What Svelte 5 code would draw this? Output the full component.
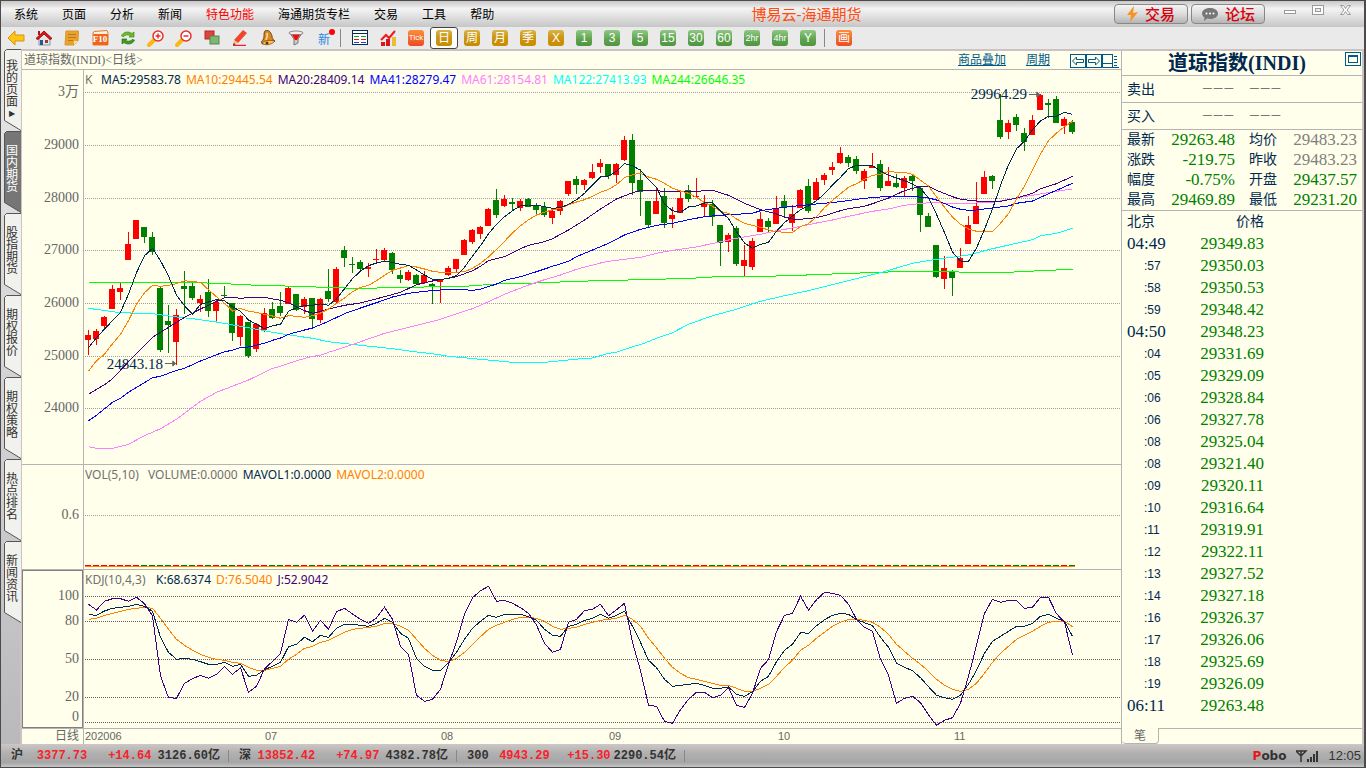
<script lang="ts">
  const menus = ['系统', '页面', '分析', '新闻', '特色功能', '海通期货专栏', '交易', '工具', '帮助'];
  const goldPeriods = ['日', '周', '月', '季', 'X'];
  const greenPeriods = ['1', '3', '5', '15', '30', '60', '2hr', '4hr', 'Y'];
  const tabs = ['我的页面', '国内期货', '股指期货', '期权报价', '期权策略', '热点排名', '新闻资讯'];

  // plot sizes in px; curve and candle data below are in thirds of a px
  const W = 1037;
  const PRICE_H = 394;
  const VOL_H = 104;
  const KDJ_H = 158;

  const priceAxis = [
    { label: '3万', y: 22 }, { label: '29000', y: 75 }, { label: '28000', y: 128 },
    { label: '27000', y: 180 }, { label: '26000', y: 233 }, { label: '25000', y: 286 },
    { label: '24000', y: 338 }
  ];
  const kdjAxis = [
    { label: '100', y: 26 }, { label: '80', y: 51 }, { label: '50', y: 89 },
    { label: '20', y: 127 }, { label: '0', y: 147 }
  ];
  const kdjGrid = [26, 51, 89, 127, 152];

  const months = [
    { label: '202006', x: 1 }, { label: '07', x: 181 }, { label: '08', x: 357 },
    { label: '09', x: 525 }, { label: '10', x: 694 }, { label: '11', x: 870 }
  ];

  // colour, high, body top, body bottom, low
  const candles = `r780,795,809,854 r777,783,806,824 r737,741,767,777 r645,657,717,717 r637,654,665,690 r486,522,570,570
    r450,450,507,507 g471,471,500,518 g486,501,546,554 g651,654,839,845 g705,753,765,849 r717,735,815,885
    g603,648,657,732 g636,648,684,690 r675,687,699,726 g627,666,723,741 r686,696,723,753 g648,675,678,684
    g699,699,789,813 r735,738,801,828 g756,756,857,864 r760,762,836,845 r714,729,780,785 g696,717,744,747
    g666,708,729,738 r651,654,701,701 g672,672,720,722 r681,687,711,732 g684,684,747,776 r684,687,750,759
    g597,663,687,696 r591,597,696,701 g528,540,564,591 g561,581,584,609 g570,576,597,603 r580,590,597,620
    r537,567,570,582 r534,540,570,576 g546,549,600,611 g600,615,627,638 r600,606,630,633 g612,615,641,642
    r603,615,640,641 g639,642,648,702 r627,630,636,699 r588,594,615,617 r567,567,597,605 r507,510,554,555
    r477,480,516,521 r468,471,492,507 r414,417,467,468 g357,390,435,444 r375,387,408,411 g384,396,402,422
    r387,393,413,422 g384,387,411,412 g398,405,420,437 g396,411,435,441 r420,423,444,462 r390,393,423,435
    r333,333,372,378 g318,327,345,372 r327,330,345,360 r282,306,324,327 r267,279,291,309 g282,282,318,327
    r279,282,315,339 r198,210,270,273 g192,210,339,375 g297,330,365,438 g393,393,465,473 r351,393,432,432
    g354,378,459,474 r411,435,447,474 r366,384,428,429 g345,360,387,396 r324,378,381,381 r375,399,411,438
    g390,402,440,468 g465,465,519,588 r489,495,516,546 g468,474,582,588 r525,570,588,619 r504,513,591,600
    r426,447,486,486 g444,453,471,486 r378,416,461,462 g375,393,413,438 r405,432,459,483 r357,360,413,414
    g327,348,422,429 r324,336,389,390 r309,315,330,345 r276,291,300,315 r231,249,279,282 g255,261,279,291
    g258,267,303,312 r297,303,333,357 r249,288,294,294 g270,282,354,363 r291,333,348,348 g312,339,350,354
    r318,324,354,378 g312,318,333,363 g351,354,435,486 g429,438,471,471 g525,525,621,624 r558,594,627,657
    g600,606,624,678 r534,564,594,594 r438,465,522,522 r336,408,462,462 r303,321,372,372 g315,318,333,357
    g72,150,201,207 r150,159,186,207 g132,141,165,183 g174,189,216,243 r135,150,195,195 r72,75,120,120
    g87,99,104,144 g78,87,158,159 r141,147,168,192 g150,156,186,192`
    .split(/\s+/)
    .map((s) => {
      const [high, top, bottom, low] = s.slice(1).split(',').map((n) => Math.round(+n / 3));
      return { up: s[0] === 'r', high, top, bottom, low };
    });

  // one value for each bar
  const every = (vals: number[], dy = 0) =>
    vals.map((v, i) => `${4.5 + 8 * i},${(v / 3 + dy).toFixed(1)}`).join(' ');
  // bar:value pairs, straight between them
  const sparse = (s: string) =>
    s.split(' ').map((p) => p.split(':').map(Number)).map(([i, v]) => `${4.5 + 8 * i},${(v / 3).toFixed(1)}`).join(' ');

  const ma5 = every([
    833, 803, 777, 752, 727, 672, 608, 557, 535, 572, 618, 675, 707, 733, 703, 696, 689, 692, 710, 724,
    750, 763, 776, 767, 763, 724, 713, 707, 706, 702, 706, 687, 656, 626, 603, 587, 579, 574, 577, 583,
    586, 600, 615, 628, 628, 626, 616, 592, 558, 527, 491, 463, 440, 422, 407, 405, 405, 410, 415, 413,
    403, 389, 370, 345, 321, 318, 304, 281, 287, 301, 329, 352, 402, 422, 427, 411, 408, 399, 398, 423,
    446, 485, 519, 535, 523, 517, 484, 458, 438, 419, 408, 392, 371, 345, 322, 296, 286, 286, 287, 303,
    316, 324, 332, 342, 355, 384, 433, 488, 546, 573, 574, 534, 478, 417, 346, 284, 236, 214, 179, 153,
    139, 139, 127, 133
  ]);
  const ma10 = every([
    903, 872, 853, 821, 793, 752, 703, 668, 646, 649, 646, 641, 632, 635, 637, 659, 680, 700, 723, 715,
    724, 727, 733, 738, 745, 737, 739, 742, 737, 729, 717, 700, 684, 665, 652, 646, 632, 616, 601, 594,
    587, 591, 597, 604, 607, 607, 607, 605, 595, 580, 561, 538, 514, 489, 467, 449, 435, 427, 419, 415,
    404, 396, 389, 379, 367, 358, 344, 323, 314, 310, 321, 328, 340, 355, 363, 370, 382, 398, 409, 424,
    430, 447, 460, 466, 472, 480, 485, 487, 487, 470, 461, 440, 413, 391, 371, 352, 341, 328, 316, 313,
    304, 307, 307, 313, 331, 348, 381, 412, 441, 463, 477, 484, 484, 484, 460, 431, 387, 348, 300, 252,
    212, 189, 170, 154
  ]);

  const averages = [
    { color: '#00ff00', points: sparse('0:637 12:637 16:640 21:646 26:649 32:654 36:654 41:652 44:649 47:649 51:642 56:639 61:634 66:631 71:628 76:624 78:621 81:619 85:619 87:617 91:614 95:610 98:608 102:604 106:604 110:607 115:607 120:601 123:598') },
    { color: '#00ffff', points: sparse('0:715 3:725 4:728 8:731 10:738 13:746 16:756 20:773 24:791 28:805 30:815 34:826 38:836 40:843 43:851 45:859 49:868 53:877 57:877 60:870 62:865 63:864 65:850 66:847 68:830 69:824 71:805 73:788 75:763 78:737 81:718 84:694 87:677 90:662 95:632 99:608 103:580 106:568 110:555 113:536 116:520 118:509 119:497 121:490 123:475') },
    { color: '#ff80ff', points: sparse('0:1130 1:1135 3:1135 5:1123 7:1097 9:1076 11:1048 14:994 16:967 20:930 23:895 24:889 26:872 28:859 29:856 30:847 32:832 34:815 37:790 39:778 41:766 44:748 46:731 48:716 50:695 52:673 55:645 57:629 59:615 61:598 64:579 65:574 67:568 69:562 71:550 73:541 76:531 79:515 81:505 84:493 86:482 88:474 91:459 93:450 95:439 98:424 100:417 102:406 105:398 108:400 110:400 113:397 116:384 119:372 121:364 123:357') },
    { color: '#0000ff', points: sparse('0:1052 1:1036 3:997 4:985 5:967 8:923 9:919 11:901 12:895 14:873 17:845 18:841 19:832 20:831 22:820 23:811 24:804 25:793 27:780 28:774 30:754 32:731 34:714 36:698 38:681 40:670 42:664 44:660 46:658 48:661 49:658 51:642 52:631 54:620 56:605 58:589 60:574 61:560 63:540 65:520 67:495 69:478 71:466 73:460 75:449 77:440 79:436 81:433 83:430 84:422 86:415 88:409 91:402 94:395 97:385 99:381 101:379 103:379 105:384 106:390 108:411 109:418 110:421 111:420 113:414 115:408 116:400 118:393 119:382 121:361 123:340') },
    { color: '#400080', points: sparse('0:973 2:944 3:926 6:850 8:802 12:742 14:717 17:683 18:682 19:685 20:683 22:682 23:687 24:691 25:698 26:711 27:722 28:730 29:724 30:717 32:706 34:699 37:680 39:667 41:644 43:633 46:620 48:602 49:589 50:572 52:560 54:536 55:526 57:515 58:506 60:480 62:450 64:417 66:387 68:368 69:362 71:362 73:366 76:364 78:361 80:376 82:400 84:419 86:432 87:441 88:447 89:448 91:443 92:437 94:422 95:416 97:409 98:401 100:384 102:362 103:355 104:349 105:349 106:361 108:380 109:388 111:393 113:395 114:394 116:384 118:370 119:356 121:341 122:330 123:319') },
    { color: '#ff8000', points: ma10 },
    { color: '#002850', points: ma5 }
  ];

  const kdj = [
    { color: '#ff8000', points: every([
      163, 160, 151, 145, 139, 133, 130, 127, 130, 160, 193, 223, 241, 256, 268, 277, 283, 286, 292, 295,
      307, 316, 316, 310, 304, 283, 268, 250, 244, 232, 226, 214, 202, 193, 190, 187, 184, 175, 175, 184,
      196, 223, 250, 271, 286, 290, 280, 262, 239, 215, 193, 181, 172, 163, 157, 157, 160, 169, 184, 193,
      190, 187, 178, 172, 166, 163, 160, 151, 163, 184, 220, 248, 280, 307, 325, 338, 343, 349, 355, 361,
      361, 370, 379, 379, 370, 358, 334, 307, 286, 256, 241, 220, 202, 184, 172, 163, 163, 166, 172, 187,
      208, 238, 259, 280, 298, 319, 343, 361, 373, 379, 373, 355, 325, 292, 265, 244, 223, 211, 199, 184,
      172, 169, 169, 185], -5) },
    { color: '#002850', points: every([
      149, 151, 138, 130, 127, 124, 118, 124, 139, 217, 262, 283, 280, 283, 290, 298, 298, 292, 304, 298,
      334, 331, 314, 304, 292, 245, 238, 217, 230, 211, 217, 190, 178, 178, 181, 184, 175, 160, 172, 205,
      220, 280, 304, 316, 316, 293, 262, 223, 190, 169, 151, 157, 148, 148, 148, 155, 166, 193, 211, 214,
      184, 178, 166, 160, 148, 160, 151, 139, 184, 232, 286, 308, 343, 364, 361, 358, 355, 361, 370, 370,
      366, 388, 394, 380, 349, 334, 290, 256, 238, 203, 205, 182, 164, 151, 145, 148, 164, 173, 182, 217,
      247, 295, 307, 317, 338, 365, 391, 398, 403, 391, 358, 316, 265, 229, 214, 199, 184, 184, 175, 154,
      148, 160, 169, 214], -5) },
    { color: '#400080', points: every([
      118, 135, 109, 101, 101, 109, 97, 116, 152, 333, 398, 400, 355, 341, 331, 340, 328, 304, 328, 308,
      382, 364, 312, 289, 265, 163, 172, 151, 199, 166, 193, 140, 130, 147, 163, 175, 159, 127, 163, 244,
      268, 391, 409, 403, 373, 298, 231, 147, 98, 77, 64, 109, 106, 115, 128, 145, 180, 235, 262, 253,
      172, 163, 137, 133, 118, 152, 134, 115, 232, 317, 421, 424, 469, 475, 434, 403, 382, 382, 398, 391,
      367, 421, 427, 385, 310, 284, 200, 151, 145, 94, 135, 104, 82, 85, 91, 118, 163, 187, 199, 283,
      331, 415, 400, 394, 413, 449, 481, 466, 458, 415, 334, 241, 145, 103, 112, 106, 106, 130, 127, 97,
      97, 146, 171, 271], -5) }
  ];

  const marks = [
    { label: '24843.18', x: 93, y: 294 },
    { label: '29964.29', x: 957, y: 24 }
  ];

  const quotes = [
    ['最新', '29263.48', 'down', '均价', '29483.23', 'flat'],
    ['涨跌', '-219.75', 'down', '昨收', '29483.23', 'flat'],
    ['幅度', '-0.75%', 'down', '开盘', '29437.57', 'down'],
    ['最高', '29469.89', 'down', '最低', '29231.20', 'down']
  ];

  const ticks = [
    ['04:49', '29349.83'], [':57', '29350.03'], [':58', '29350.53'], [':59', '29348.42'],
    ['04:50', '29348.23'], [':04', '29331.69'], [':05', '29329.09'], [':06', '29328.84'],
    [':06', '29327.78'], [':08', '29325.04'], [':08', '29321.40'], [':09', '29320.11'],
    [':10', '29316.64'], [':11', '29319.91'], [':12', '29322.11'], [':13', '29327.52'],
    [':14', '29327.18'], [':16', '29326.37'], [':17', '29326.06'], [':18', '29325.69'],
    [':19', '29326.09'], ['06:11', '29263.48']
  ];

  const indices = [
    { name: '沪', last: '3377.73', change: '+14.64', amount: '3126.60亿' },
    { name: '深', last: '13852.42', change: '+74.97', amount: '4382.78亿' },
    { name: '300', last: '4943.29', change: '+15.30', amount: '2290.54亿' }
  ];
</script>

{#snippet grid(ys: number[], color: string)}
  {#each ys as y}
    <line x1="1" x2={W} y1={y + 0.5} y2={y + 0.5} stroke={color} stroke-dasharray="1 1" />
  {/each}
{/snippet}

<div class="app">
  <header class="menubar">
    <nav class="menus">
      {#each menus as m}
        <button class="menu" class:hot={m === '特色功能'}>{m}</button>
      {/each}
    </nav>
    <h1 class="app-title">博易云-海通期货</h1>
    <div class="top-right">
      <button class="pill">
        <svg width="12" height="16" viewBox="0 0 12 16"><path d="M7 0 0 9l4 0-1 7 8-10-5 1z" fill="#f7941d" /></svg>
        交易
      </button>
      <button class="pill">
        <svg width="18" height="15" viewBox="0 0 18 15">
          <path d="M9 1c5 0 8 2.500 8 5.500S14 12 9 12c-1 0-2 0-3-.4L3 14l.5-3.500C2 9.500 1 8 1 6.500 1 3.500 4 1 9 1z" fill="#777" />
          <circle cx="5.500" cy="6.500" r="1" fill="#fff" /><circle cx="9" cy="6.500" r="1" fill="#fff" /><circle cx="12.500" cy="6.500" r="1" fill="#fff" />
        </svg>
        论坛
      </button>
      <div class="win">
        <button aria-label="最小化"><svg width="13" height="14"><rect x="1.500" y="6.500" width="11" height="3" fill="#fff" stroke="#999" /></svg></button>
        <button aria-label="最大化"><svg width="13" height="14"><rect x="1.500" y="1.500" width="11" height="9" fill="#fff" stroke="#999" /><rect x="4.500" y="4.500" width="5" height="3" fill="#eee" stroke="#999" /></svg></button>
        <button aria-label="关闭"><svg width="13" height="14"><path d="M1.500 1.500h3l2 3 2-3h3l-3.500 4.500 3.500 4.500h-3l-2-3-2 3h-3L5 6z" fill="#fff" stroke="#999" /></svg></button>
      </div>
    </div>
  </header>

  <div class="toolbar">
    <button class="tool" aria-label="后退">
      <svg width="18" height="16" viewBox="0 0 18 16"><path d="M1 8 8 1v4h9v6H8v4z" fill="#fdc516" stroke="#d9930b" /></svg>
    </button>
    <button class="tool" aria-label="首页">
      <svg width="18" height="16" viewBox="0 0 18 16">
        <path d="M4 7v8h11V7L9.500 2z" fill="#e4e6ea" stroke="#8b94a0" />
        <path d="M1 8.500 9 1l8 7.500-2 1L9 4 3 9.500z" fill="#e01818" stroke="#a01010" /><rect x="3" y="1" width="2" height="4" fill="#b01515" />
        <rect x="5" y="10" width="3" height="5" fill="#27598c" /><rect x="10" y="10" width="3" height="3" fill="#a8342c" />
      </svg>
    </button>
    <button class="tool" aria-label="记事">
      <svg width="16" height="16" viewBox="0 0 16 16">
        <path d="M2 1h12.500l-.5 10-4 4H1z" fill="#e9a32b" stroke="#d9962c" /><path d="M10 15v-4h4z" fill="#ffe0a0" />
        <path d="M4 4.500h8M4 7.500h8M4 10.500h5" stroke="#b87a1c" />
      </svg>
    </button>
    <button class="tool" aria-label="F10">
      <svg width="17" height="16" viewBox="0 0 17 16"><path d="M2 1.500 15 .5 16 3v12H1V3z" fill="#fff0dc" stroke="#df7a2e" /><rect x="1" y="4" width="15" height="11" rx="1" fill="#f0651e" /></svg>
      <span class="f10">F10</span>
    </button>
    <button class="tool" aria-label="刷新">
      <svg width="16" height="16" viewBox="0 0 16 16">
        <path d="M1.500 6C3 1.500 9 1 12 3.500L14 2v5H9l1.500-1.500C8 4.500 5 4.500 4 6.500z" fill="#6cbb2c" stroke="#3f8a14" stroke-width=".7" />
        <path d="M14.500 10C13 14.500 7 15 4 12.500L2 14V9h5l-1.500 1.500c2.500 1 5.500 1 6.500-1z" fill="#3f9c1c" stroke="#2d7310" stroke-width=".7" />
      </svg>
    </button>
    {#each ['放大', '缩小'] as name, i}
      <button class="tool" aria-label={name}>
        <svg width="18" height="17" viewBox="0 0 18 17">
          <path d="m2 15 5-5" stroke="#fbb80f" stroke-width="4" stroke-linecap="round" />
          <circle cx="11" cy="6" r="5" fill="#fff" stroke="#e8302a" stroke-width="1.500" />
          <path d={i ? 'M8.500 6h5' : 'M8.500 6h5M11 3.500v5'} stroke="#e8302a" stroke-width="1.500" />
        </svg>
      </button>
    {/each}
    <button class="tool" aria-label="叠加">
      <svg width="16" height="16" viewBox="0 0 16 16"><rect x="1" y="1" width="9" height="8" fill="#e2403c" stroke="#b32824" /><rect x="6" y="6" width="9" height="8" fill="#7fb673" stroke="#4d8a46" /></svg>
    </button>
    <button class="tool" aria-label="画线">
      <svg width="16" height="16" viewBox="0 0 16 16"><path d="M11 0 15 3 6 13l-4-3z" fill="#f0472c" /><path d="m2 10 4 3-5 2z" fill="#f6bf7c" /><path d="M1 15.500h13" stroke="#e22" stroke-width="1.500" /><path d="m1 15 1-2 1.500 1.500z" fill="#222" /></svg>
    </button>
    <button class="tool" aria-label="预警">
      <svg width="16" height="16" viewBox="0 0 16 16"><path d="M5 1c3-2 6 1 7 5 0 2 1 4 3 5l-12 3c-2 0-2-3 0-4 2-2 0-7 2-9z" fill="#d58a28" stroke="#7a430c" /><path d="M2 13c3-3 8-3 13-2-3 4-10 5-13 2z" fill="#f8c34a" stroke="#7a430c" stroke-width=".7" /><circle cx="7" cy="13" r="1.500" fill="#6b2d10" /><path d="M7 3c1 3 0 5-1 7" stroke="#ffe09a" stroke-width="1.500" fill="none" /></svg>
    </button>
    <button class="tool" aria-label="筛选">
      <svg width="16" height="16" viewBox="0 0 16 16"><path d="M1.500 2.500 6 9v6l4-2V9l4.500-6.500z" fill="#ccc" stroke="#777" /><ellipse cx="8" cy="3" rx="7" ry="2" fill="#eee" stroke="#888" /><path d="M4 4.500h8L9 10H7z" fill="#e11" /></svg>
    </button>
    <button class="tool new">新<i></i></button>
    <span class="sep"></span>
    <button class="tool" aria-label="报价表">
      <svg width="17" height="16" viewBox="0 0 17 16" shape-rendering="crispEdges"><rect x=".5" y=".5" width="15" height="14" fill="#fff" stroke="#0b2b4b" /><path fill="#0b2b4b" d="M1 3h15v1H1z" /><path stroke="#0a2" d="M2 6.500h5M9 6.500h5" /><path stroke="#e11" d="M2 9.500h5M9 9.500h5" /><path stroke="#24c" d="M2 12.500h5M9 12.500h5" /></svg>
    </button>
    <button class="tool" aria-label="走势图">
      <svg width="17" height="16" viewBox="0 0 17 16"><path d="M1 12h4v4H1zM6 9h4v7H6z" fill="#d6161b" /><path d="M12 7h4v9h-4z" fill="#edbc37" /><path d="m1 10 5-5 3 3 6-7" stroke="#f01818" stroke-width="2" fill="none" /></svg>
    </button>
    <button class="tool"><span class="tile red tick">Tick</span></button>
    {#each goldPeriods as p}
      <button class="tool" class:selected={p === '日'}><span class="tile gold">{p}</span></button>
    {/each}
    {#each greenPeriods as p}
      <button class="tool"><span class="tile green" class:small={p.length === 3}>{p}</span></button>
    {/each}
    <span class="sep"></span>
    <button class="tool"><span class="tile red">画</span></button>
  </div>

  <main class="main">
    <nav class="rail">
      {#each tabs as t, i}
        <button class="rail-tab" class:active={i === 1} class:first={i === 0}>
          <svg class="tab-shape" width="17" height="82" viewBox="0 0 17 82">
            <path d="M17 81.500.5 71.500V2.500l2-2H17" />
          </svg>
          <span class="tab-text">{t}{#if i === 0}<small>▶</small>{/if}</span>
        </button>
      {/each}
    </nav>

    <section class="charts">
      <div class="chart-head">
        <span class="symbol">道琼指数(INDI)&lt;日线&gt;</span>
        <a href="#overlay">商品叠加</a>
        <a href="#period">周期</a>
        <div class="head-icons">
          <button aria-label="上一页"><svg width="16" height="14"><rect x=".5" y=".5" width="15" height="13" /><path d="M2.500 7 6.500 3v2.500h7v3h-7V11z" /></svg></button>
          <button aria-label="下一页"><svg width="16" height="14"><rect x=".5" y=".5" width="15" height="13" /><path d="M13.500 7 9.500 3v2.500h-7v3h7V11z" /></svg></button>
          <button aria-label="布局"><svg width="17" height="14"><path d="M.5 0v13.500H17M.5 .5H11M10.500 0v13M.5 9.500h10M12 2.500h3M12 5.500h3M12 8.500h3M12 11.500h3" /></svg></button>
        </div>
      </div>

      <div class="panel">
        <div class="axis">
          {#each priceAxis as a}
            <span style="top: {(a.y / PRICE_H) * 100}%">{a.label}</span>
          {/each}
        </div>
        <div class="plot">
          <svg viewBox="0 0 {W} {PRICE_H}" preserveAspectRatio="none">
            {@render grid(priceAxis.map((a) => a.y), '#a0a0a0')}
            {#each candles as c, i}
              <g fill={c.up ? '#ff0000' : '#008000'}>
                <rect x={4 + 8 * i} y={c.high} width="1" height={c.low - c.high} />
                <rect x={1 + 8 * i} y={c.top} width="6" height={Math.max(1, c.bottom - c.top)} />
              </g>
            {/each}
            {#each averages as line}
              <polyline points={line.points} stroke={line.color} />
            {/each}
          </svg>
          <div class="legend">
            <span class="muted wide">K</span>
            <span class="navy">MA5:29583.78</span>
            <span class="orange">MA10:29445.54</span>
            <span class="purple">MA20:28409.14</span>
            <span class="blue">MA41:28279.47</span>
            <span class="pink">MA61:28154.81</span>
            <span class="cyan">MA122:27413.93</span>
            <span class="lime">MA244:26646.35</span>
          </div>
          {#each marks as m}
            <span class="mark" style="left: {(m.x / W) * 100}%; top: {(m.y / PRICE_H) * 100}%">
              {m.label}
              <svg width="12" height="7" viewBox="0 0 12 7"><path d="M0 3.500h10M8 1l3 2.500L8 6z" fill="#666" stroke="#666" /></svg>
            </span>
          {/each}
        </div>
      </div>

      <div class="panel">
        <div class="axis"><span style="top: {(50 / VOL_H) * 100}%">0.6</span></div>
        <div class="plot">
          <svg viewBox="0 0 {W} {VOL_H}" preserveAspectRatio="none">
            {@render grid([50], '#a0a0a0')}
            {#each candles as c, i}
              <rect x={1 + 8 * i} y="100" width="6" height="1" fill={c.up ? '#ff0000' : '#008000'} />
            {/each}
            <rect x="1" y="101" width="990" height="1" fill="#ff8000" />
          </svg>
          <div class="legend">
            <span class="muted formula">VOL(5,10)</span>
            <span class="muted">VOLUME:0.0000</span>
            <span class="navy">MAVOL1:0.0000</span>
            <span class="orange">MAVOL2:0.0000</span>
          </div>
        </div>
      </div>

      <div class="panel">
        <div class="axis boxed">
          {#each kdjAxis as a}
            <span style="top: {(a.y / KDJ_H) * 100}%">{a.label}</span>
          {/each}
        </div>
        <div class="plot">
          <svg viewBox="0 0 {W} {KDJ_H}" preserveAspectRatio="none">
            {@render grid(kdjGrid, '#606060')}
            {#each kdj as line}
              <polyline points={line.points} stroke={line.color} />
            {/each}
          </svg>
          <div class="legend">
            <span class="muted formula-long">KDJ(10,4,3)</span>
            <span class="navy">K:68.6374</span>
            <span class="orange">D:76.5040</span>
            <span class="purple">J:52.9042</span>
          </div>
        </div>
      </div>

      <div class="time-axis">
        <span class="period">日线</span>
        <div class="months">
          {#each months as m}
            <span style="left: {(m.x / W) * 100}%">{m.label}</span>
          {/each}
        </div>
      </div>
    </section>

    <aside class="side">
      <div class="side-head">
        <h2>道琼指数(INDI)</h2>
        <button class="restore" aria-label="还原"><svg width="16" height="14"><rect x=".5" y=".5" width="15" height="13" /><rect x="3.500" y="3.500" width="9" height="7" /><path d="M3 4.500h10" /></svg></button>
      </div>
      <div class="order"><span>卖出</span><span class="dashes">−−−</span><span class="dashes">−−−</span></div>
      <div class="order"><span>买入</span><span class="dashes">−−−</span><span class="dashes">−−−</span></div>
      <table class="quotes">
        <tbody>
          {#each quotes as [a, av, ac, b, bv, bc]}
            <tr>
              <th>{a}</th><td class="{ac} value">{av}</td>
              <th class="second">{b}</th><td class="{bc} last-value">{bv}</td>
            </tr>
          {/each}
        </tbody>
      </table>
      <table class="ticks">
        <thead><tr><th class="time">北京</th><th class="price">价格</th><th></th></tr></thead>
        <tbody>
          {#each ticks as [time, price]}
            <tr><td class="time" class:sec={time.length === 3}>{time}</td><td class="price down">{price}</td><td></td></tr>
          {/each}
        </tbody>
      </table>
      <div class="side-foot"><button>笔</button></div>
    </aside>
  </main>

  <footer class="status">
    {#each indices as x}
      <div class="index">
        <span class="name">{x.name}</span>
        <span class="last">{x.last}</span>
        <span class="change">{x.change}</span>
        <span>{x.amount}</span>
      </div>
    {/each}
    <span class="brand"><b>P</b>obo</span>
    <svg width="22" height="12" viewBox="0 0 22 12"><path d="M0 1h10L5 6zM5 1v11" fill="none" stroke="#333" stroke-width="1.500" /><path d="M11 9h2v3h-2zM14 7h2v5h-2zM17 4h2v8h-2zM20 1h2v11h-2z" fill="#333" /></svg>
    <span class="clock">12:05</span>
  </footer>
</div>

<style>
  :global(body) {
    margin: 0;
  }

  .app {
    box-sizing: border-box;
    min-height: 100vh;
    display: flex;
    flex-direction: column;
    border: 1px solid #4c4a4b;
    border-right-width: 2px;
    background: #ffffeb;
    font-family: 'Liberation Serif', 'Noto Sans CJK SC', serif;
    font-size: 12px;
    color: #002850;
  }

  button {
    margin: 0;
    padding: 0;
    border: 0;
    background: none;
    font: inherit;
    color: inherit;
  }

  h1, h2 {
    margin: 0;
    font-weight: 400;
  }

  svg { display: block; }

  /* menu bar */
  .menubar {
    display: grid;
    grid-template-columns: 1fr auto 1fr;
    height: 26px;
    background: linear-gradient(#c9c6c7, #f3f3f3 30%, #e4e4e4 55%, #c6c6c6);
  }

  .menus {
    display: flex;
    gap: 24px;
    padding-left: 13px;
  }

  .menu {
    line-height: 28px;
    color: #000;
    white-space: nowrap;
  }

  .menu.hot { color: #f00; }

  .app-title {
    padding-left: 248px;
    font-family: 'Liberation Sans', 'Noto Sans CJK SC', sans-serif;
    font-size: 15px;
    line-height: 28px;
    color: #ff4a10;
  }

  .top-right {
    display: flex;
    justify-content: flex-end;
    gap: 3px;
    padding-top: 3px;
  }

  .pill {
    display: flex;
    align-items: center;
    justify-content: center;
    gap: 6px;
    box-sizing: border-box;
    width: 74px;
    height: 20px;
    border: 1px solid #888;
    border-radius: 4px;
    background: linear-gradient(#f4f4f4, #dcdcdc 50%, #b4b4b4);
    font-family: 'Noto Sans CJK SC', sans-serif;
    font-size: 15px;
    font-weight: 500;
    line-height: 18px;
    color: #d8000c;
  }

  .win {
    display: flex;
    align-items: flex-start;
    margin-left: 7px;
    margin-right: 5px;
  }

  .win button {
    display: flex;
    justify-content: center;
    width: 28px;
  }

  /* toolbar */
  .toolbar {
    display: flex;
    align-items: center;
    height: 22px;
    padding-left: 1px;
    border-bottom: 2px solid #cbc3c3;
    background: #eaeaea;
  }

  .tool {
    position: relative;
    display: flex;
    align-items: center;
    justify-content: center;
    box-sizing: border-box;
    width: 28px;
    height: 22px;
  }

  .tool.selected {
    border: 1px solid #444;
    border-radius: 3px;
    background: #fff;
  }

  .f10 {
    position: absolute;
    inset: 0;
    font: 700 9px/24px 'Liberation Serif', serif;
    color: #fff;
  }

  .new {
    font-family: 'Noto Sans CJK SC', sans-serif;
    color: #2d86e0;
  }

  .new i {
    position: absolute;
    top: 2px;
    right: 3px;
    width: 6px;
    height: 6px;
    border-radius: 50%;
    background: #f00;
  }

  .sep {
    width: 1px;
    height: 18px;
    margin: 0 5px 0 2px;
    background: #888;
  }

  .tile {
    width: 16px;
    height: 16px;
    border-radius: 3px;
    font: 12px/16px 'Liberation Sans', 'Noto Sans CJK SC', sans-serif;
    color: #fff;
    text-align: center;
    white-space: nowrap;
  }

  .tile.gold { background: linear-gradient(#d9b44a, #cc9410 50%, #c98c00); }
  .tile.green { background: linear-gradient(#8fc983, #5ea34e 60%, #4f943e); }
  .tile.red { background: linear-gradient(#f9903c, #ee4a20); }
  .tile.small { font-size: 9px; }
  .tile.tick { font-size: 8px; }

  /* main area */
  .main {
    flex: 1;
    display: grid;
    grid-template-columns: 21px 1fr 240px;
    border-right: 2px solid #cbc3c3;
  }

  .rail {
    display: flex;
    flex-direction: column;
    box-sizing: border-box;
    margin-top: -2px;
    border-right: 2px solid #cbc3c3;
    padding-left: 3px;
    background: linear-gradient(#e6e6e6, #cfcfd1 60%, #b9b9bb);
  }

  .rail-tab {
    position: relative;
    height: 82px;
    font-family: 'Noto Sans CJK SC', sans-serif;
    line-height: 12px;
    color: #333;
  }

  .tab-shape {
    position: absolute;
    top: 0;
    left: 0;
  }

  .tab-shape path {
    fill: #f1f1ee;
    stroke: #555;
  }

  .active .tab-shape path { fill: #767676; }
  .active { color: #fff; }

  .tab-text {
    position: relative;
    display: block;
    width: 12px;
    margin: 0 auto;
    padding-bottom: 8px;
    word-break: break-all;
  }

  .first .tab-text { padding-bottom: 0; }

  .tab-text small {
    display: block;
    font: 8px/14px 'DejaVu Sans', sans-serif;
  }

  .charts {
    display: grid;
    grid-template-rows: 19px 395fr 105fr 159fr 15px;
    border-right: 1px solid #b4b4b4;
  }

  .chart-head {
    display: flex;
    border-bottom: 1px solid #b4b4b4;
    padding: 0 2px;
    line-height: 18px;
  }

  .symbol {
    flex: 1;
    color: #666;
  }

  .chart-head a {
    margin-right: 20px;
    color: #00598c;
    text-decoration: underline;
  }

  .head-icons {
    display: flex;
    padding-top: 1px;
  }

  .head-icons svg,
  .restore svg {
    fill: none;
    stroke: #00598c;
  }

  .panel {
    display: grid;
    grid-template-columns: 61px 1fr;
    border-bottom: 1px solid #b4b4b4;
  }

  .axis {
    position: relative;
    font-size: 14px;
    line-height: 16px;
    color: #666;
  }

  .axis.boxed { box-shadow: inset 0 0 0 1px #808080; }

  .axis span {
    position: absolute;
    right: 4px;
    transform: translateY(-50%);
  }

  .plot {
    position: relative;
    border-left: 1px solid #b4b4b4;
  }

  .plot > svg {
    position: absolute;
    width: 100%;
    height: 100%;
    shape-rendering: crispEdges;
  }

  polyline { fill: none; }

  .legend {
    position: relative;
    display: flex;
    gap: 5px;
    padding-left: 1px;
    font: 12px/20px 'Noto Sans', sans-serif;
    white-space: nowrap;
  }

  .wide { width: 11px; }
  .formula { width: 58px; }
  .formula-long { width: 66px; }
  .muted { color: #707070; }
  .navy { color: #002850; }
  .orange { color: #ff8000; }
  .purple { color: #400080; }
  .blue { color: #00f; }
  .pink { color: #ff80ff; }
  .cyan { color: #0ff; }
  .lime { color: #0f0; }

  .mark {
    position: absolute;
    display: flex;
    align-items: center;
    gap: 2px;
    transform: translate(-100%, -50%);
    font-size: 15px;
    line-height: 16px;
  }

  .time-axis {
    display: grid;
    grid-template-columns: 61px 1fr;
    line-height: 15px;
    color: #666;
  }

  .period {
    padding-right: 4px;
    text-align: right;
  }

  .months {
    position: relative;
    border-left: 1px solid #b4b4b4;
    font: 11px/15px 'Liberation Sans', sans-serif;
  }

  .months span { position: absolute; }

  /* quote panel */
  .side {
    display: flex;
    flex-direction: column;
    font-size: 14px;
  }

  .side-head {
    position: relative;
    height: 24px;
    border-bottom: 1px solid #b4b4b4;
    text-align: center;
  }

  .side-head h2 {
    padding-right: 10px;
    font-size: 20px;
    font-weight: 700;
    line-height: 24px;
  }

  .restore {
    position: absolute;
    top: 1px;
    right: 1px;
  }

  .order {
    display: flex;
    gap: 15px;
    height: 26px;
    padding: 0 5px;
    border-bottom: 1px solid #b4b4b4;
    line-height: 28px;
    white-space: nowrap;
  }

  .order span:first-child { width: 60px; }

  .dashes {
    width: 32px;
    font-size: 19px;
    line-height: 26px;
    color: #777;
  }

  table {
    width: 100%;
    border-collapse: collapse;
    table-layout: fixed;
  }

  th, td {
    padding: 0;
    font-weight: 400;
    text-align: left;
  }

  .quotes { border-bottom: 1px solid #b4b4b4; }

  .quotes tr, .quotes td, .quotes th {
    height: 20px;
    line-height: 20px;
  }

  .quotes th {
    width: 33px;
    padding-left: 5px;
  }

  .quotes th.second {
    width: 28px;
    padding-left: 14px;
  }

  .quotes td {
    font-size: 17px;
    text-align: right;
  }

  .quotes .value { width: 75px; }
  .quotes .last-value { padding-right: 5px; }

  .down { color: #008000; }
  .flat { color: #808080; }

  .ticks tr, .ticks td, .ticks th {
    height: 22px;
    line-height: 22px;
  }

  .ticks .time {
    width: 45px;
    padding-left: 5px;
  }

  .ticks .price {
    width: 92px;
    text-align: right;
  }

  .ticks td { font-size: 17px; }

  .ticks td.sec {
    padding-left: 22px;
    width: 28px;
    font: 12px/22px 'Liberation Sans', sans-serif;
  }

  .side-foot {
    flex: 1;
    display: flex;
    align-items: flex-end;
  }

  .side-foot::after {
    content: '';
    flex: 1;
    height: 15px;
    border-top: 1px solid #b4b4b4;
  }

  .side-foot button {
    width: 37px;
    height: 16px;
    border-right: 1px solid #b4b4b4;
    border-bottom: 1px solid #b4b4b4;
    border-radius: 0 0 4px 4px;
    font-size: 12px;
    line-height: 14px;
    color: #666;
  }

  /* status bar */
  .status {
    display: flex;
    align-items: center;
    height: 23px;
    padding: 0 3px 0 0;
    background: linear-gradient(#cdc7c7, #b0b0b0 40%, #a6a6a6 80%, #c4c4c4);
    font: 700 12px/24px 'Liberation Mono', 'Noto Sans CJK SC', monospace;
    color: #333;
    white-space: nowrap;
  }

  .index {
    display: flex;
    justify-content: space-between;
    align-items: center;
    box-sizing: border-box;
    width: 228px;
    height: 12px;
    padding: 0 8px 0 10px;
    border-right: 1px solid #888;
  }

  .name { min-width: 12px; }

  .last, .change {
    width: 58px;
    text-align: right;
    color: #f8222a;
  }

  .brand {
    margin-left: auto;
    margin-right: 10px;
    font-family: 'DejaVu Sans', sans-serif;
  }

  .brand b { color: #e3181f; }

  .clock {
    margin-left: 10px;
    font: 13px/24px 'Liberation Sans', sans-serif;
  }
</style>
